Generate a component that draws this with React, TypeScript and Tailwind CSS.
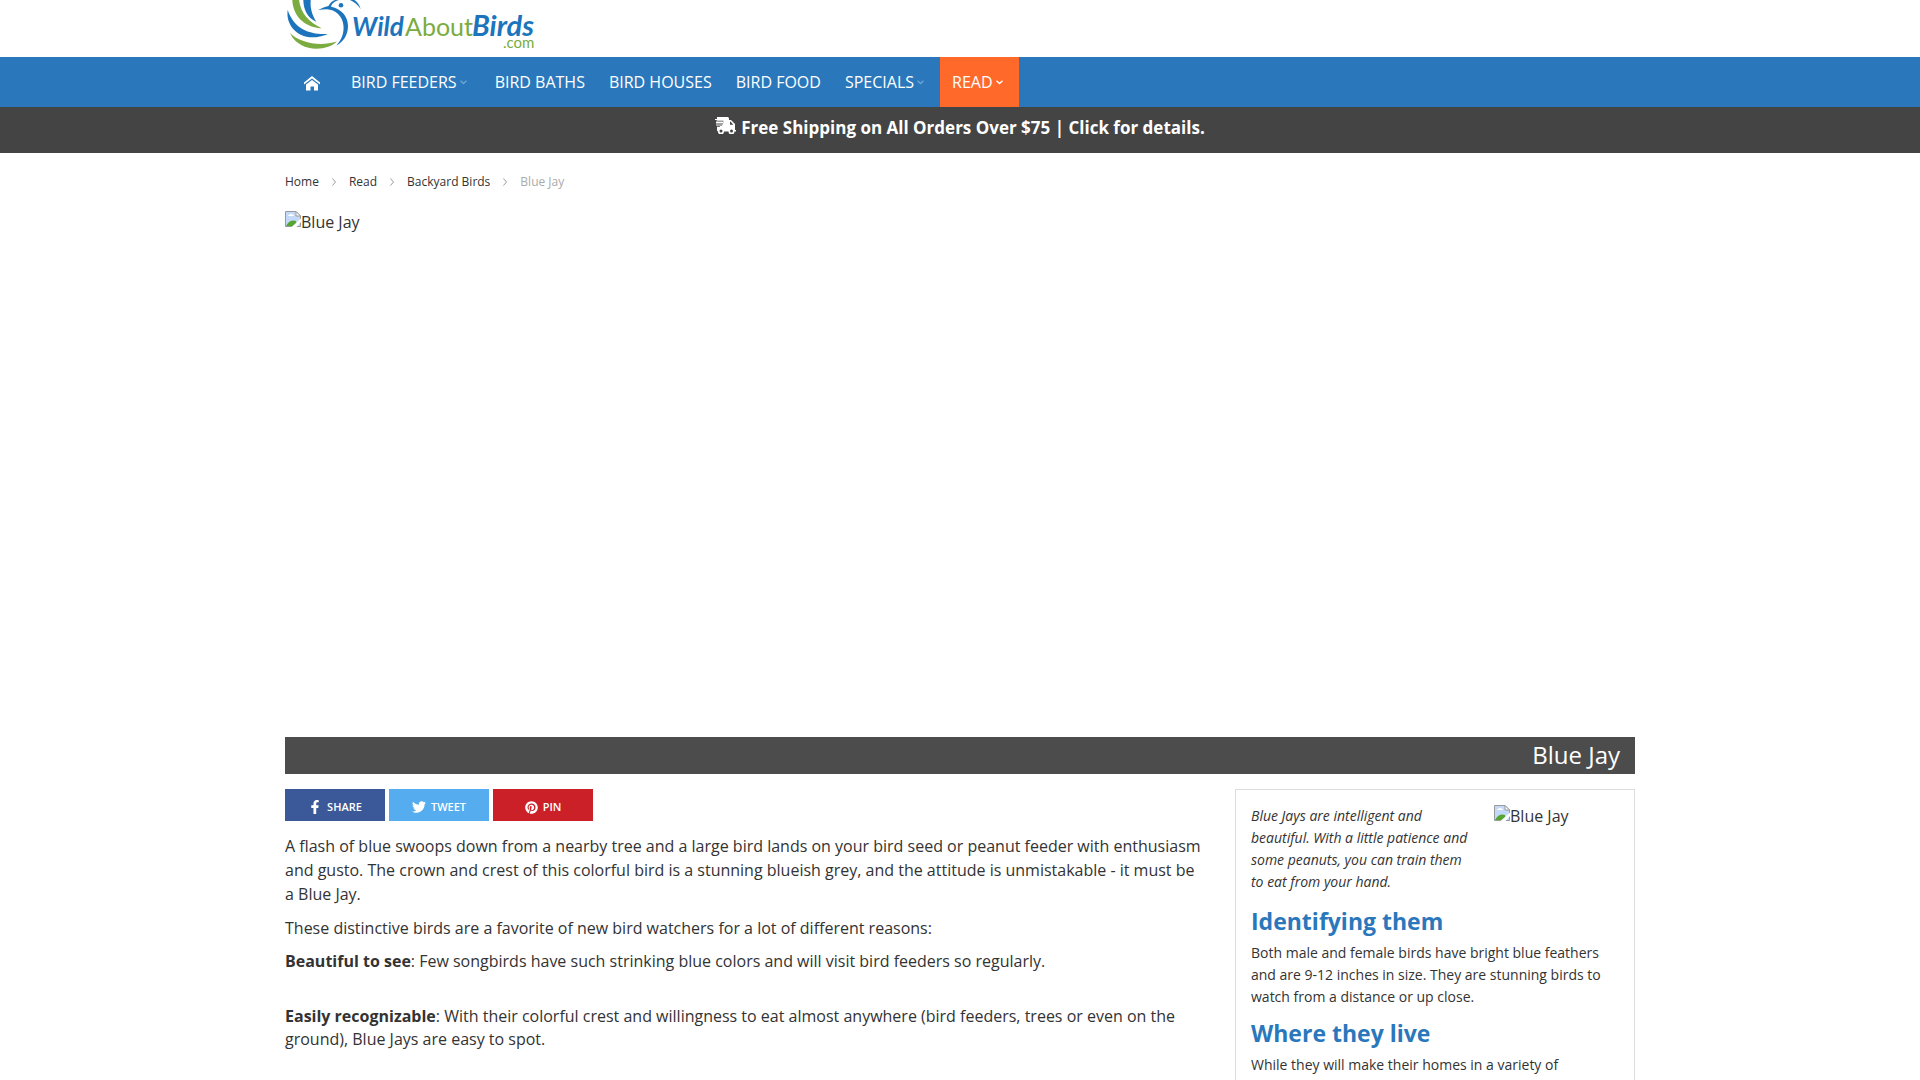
import React from "react";
import { FaFacebookF, FaTwitter, FaPinterest } from "react-icons/fa";

const NAV = [
  { label: "BIRD FEEDERS", menu: true },
  { label: "BIRD BATHS" },
  { label: "BIRD HOUSES" },
  { label: "BIRD FOOD" },
  { label: "SPECIALS", menu: true },
  { label: "READ", menu: true, active: true },
];

const CRUMBS = ["Home", "Read", "Backyard Birds"];

function Logo() {
  return (
    <svg width="260" height="57" viewBox="0 0 260 57" role="img" aria-label="WildAboutBirds.com">
      <g fill="#7aac3f">
        <path d="M7.3 0C8 14 17 27 36.7 28.3C24 22 16 14 14 0Z" />
        <path d="M5 33C15 43 35 47 52 41.5C42 51.5 14 53 5 33Z" />
      </g>
      <g fill="#1c75bc">
        <path d="M18.3 0C18.5 9 22 18 31.3 21.7C27 15 25 8 25.7 0Z" />
        <path d="M2.7 10C0 27 17 45 43 34C25 35 9 29 2.7 10Z" />
        <path d="M33 10C38 7.5 41 6.5 43.5 6C45 3 47 1 50 0H54C49 1.5 46.5 4 46 6.8C57 9 63 17 63 26C63 35 58.5 41.5 51.5 45.5C57 39 59 33 58.5 26C58 16 50 9.5 42 9.2C39 9.2 36 9.6 33 10Z" />
        <path d="M65 0H69.5C72.5 2 74.5 5 75.7 9C73 5 69.5 2 65 0Z" />
        <circle cx="56" cy="5.2" r="2.3" />
      </g>
      <text x="67" y="36" fill="#1c75bc" fontFamily="Lato, sans-serif" fontSize="26" fontWeight="700" fontStyle="italic">Wild</text>
      <text x="120" y="36" fill="#7aac3f" fontFamily="Lato, sans-serif" fontSize="25" fontWeight="400">About</text>
      <text x="187" y="36" fill="#1c75bc" fontFamily="Lato, sans-serif" fontSize="29" fontWeight="700" fontStyle="italic">Birds</text>
      <text x="218" y="48" fill="#7aac3f" fontFamily="Lato, sans-serif" fontSize="15">.com</text>
    </svg>
  );
}

function HomeIcon() {
  return (
    <svg width="16" height="15" viewBox="0 0 16 15" fill="currentColor" aria-hidden="true">
      <path d="M8 0L16 6.4V8.6L8 2.4L0 8.6V6.4Z" />
      <path d="M8 4L14 8.6V14.5H10V10.5H6.5V14.5H2V8.6Z" />
    </svg>
  );
}

function ChevronDown() {
  return (
    <svg width="7" height="5" viewBox="0 0 7 5" fill="none" stroke="currentColor" strokeWidth="1.3" aria-hidden="true">
      <path d="M0.5 0.8L3.5 3.6L6.5 0.8" />
    </svg>
  );
}

function ChevronRight() {
  return (
    <svg width="4" height="8" viewBox="0 0 4 8" fill="none" stroke="#999" aria-hidden="true">
      <path d="M0.4 0.5L3.5 4L0.4 7.5" />
    </svg>
  );
}

function TruckIcon() {
  return (
    <svg width="21" height="17" viewBox="0 0 21 17" aria-hidden="true">
      <path fill="#fff" d="M2 0H12.5Q14 0 14 1.5V3H16L20 7V13H21V14.5H19.5A3 3 0 0 1 13.5 14.5H9A3 3 0 0 1 3 14.5Q2 14 2 13Z" />
      <path fill="#444" d="M15 4.5V7.8H18.4L15.4 4.5Z" />
      <path fill="#a0a0a0" d="M1 3.5H8.5V5.5L7 9H1Z" />
      <path stroke="#fff" strokeWidth="1" d="M0 2.5H9M1 5.5H8" />
      <path stroke="#444" strokeWidth="0.7" d="M0 9.5H5" />
      <circle cx="6" cy="14" r="1.5" fill="#444" />
      <circle cx="16.5" cy="14" r="1.5" fill="#444" />
    </svg>
  );
}

function MissingPicture({ label }: { label: string }) {
  return (
    <div className="flex items-start" role="img" aria-label={label}>
      <svg width="16" height="16" viewBox="0 0 16 16" aria-hidden="true">
        <path d="M0.5 0.5H11L15.5 5V15.5H0.5Z" fill="#c3d9f7" stroke="#9a9a9a" />
        <path d="M3 5Q3 3.5 5 3.5Q6 2 7.5 3.5Q9 3.5 9 5Z" fill="#fff" />
        <path d="M1 15Q5 8 11 10L12 15Z" fill="#55a532" />
        <path d="M11 0.5V5H15.5Z" fill="#fff" stroke="#9a9a9a" />
        <path d="M6.5 16L16 7.5V11L11.5 16Z" fill="#fff" />
      </svg>
      <span className="leading-[22px]">{label}</span>
    </div>
  );
}

function ShareButton({ color, icon, label }: { color: string; icon: React.ReactNode; label: string }) {
  return (
    <button className={`flex h-8 w-[100px] items-center justify-center gap-[5px] pt-1 text-[11px] font-semibold text-white ${color}`}>
      {icon}
      {label}
    </button>
  );
}

export default function App() {
  return (
    <div className="flex h-screen flex-col overflow-hidden bg-white font-['Open_Sans',sans-serif] text-base text-[#333]">
      <header className="shrink-0">
        <div className="mx-auto h-[57px] max-w-[1350px]">
          <a href="#" className="inline-block">
            <Logo />
          </a>
        </div>
        <nav className="bg-[#2a78bb] text-white">
          <div className="mx-auto flex h-[50px] max-w-[1350px]">
            <a href="#" aria-label="Home" className="flex items-center px-[19px] pt-0.5">
              <HomeIcon />
            </a>
            {NAV.map((item) => (
              <a
                key={item.label}
                href="#"
                className={`flex items-center gap-[3px] px-3 ${item.active ? "bg-[#ff6a2b]" : ""}`}
              >
                {item.label}
                {item.menu && (
                  <span className={`mr-1 ${item.active ? "text-white" : "text-[#6fa5d4]"}`}>
                    <ChevronDown />
                  </span>
                )}
              </a>
            ))}
          </div>
        </nav>
        <div className="h-[46px] bg-[#444] text-[17px] font-bold text-white">
          <a href="#" className="flex justify-center gap-[5px] pt-2">
            <span className="pt-0.5">
              <TruckIcon />
            </span>
            <span className="leading-[26px]">Free Shipping on All Orders Over $75 | Click for details.</span>
          </a>
        </div>
      </header>

      <main className="mx-auto flex min-h-0 w-full max-w-[1350px] flex-1 flex-col">
        <nav aria-label="Breadcrumb" className="flex h-[58px] shrink-0 items-center text-xs">
          {CRUMBS.map((c) => (
            <span key={c} className="flex items-center">
              <a href="#">{c}</a>
              <span className="px-[13px]">
                <ChevronRight />
              </span>
            </span>
          ))}
          <span className="text-[#aaa]">Blue Jay</span>
        </nav>

        <div className="h-[526px] shrink-0">
          <MissingPicture label="Blue Jay" />
        </div>
        <h1 className="shrink-0 bg-[#4c4c4c] pr-[15px] pb-0.5 text-right text-2xl leading-[35px] text-white">Blue Jay</h1>

        <div className="flex min-h-0 flex-1 justify-between pt-[15px]">
          <article className="w-[920px]">
            <div className="mb-[13px] flex gap-1">
              <ShareButton color="bg-[#3b5998]" icon={<FaFacebookF size={14} />} label="SHARE" />
              <ShareButton color="bg-[#55acee]" icon={<FaTwitter size={14} />} label="TWEET" />
              <ShareButton color="bg-[#cb2027]" icon={<FaPinterest size={13} />} label="PIN" />
            </div>
            <p className="mb-[10px] leading-6">
              A flash of blue swoops down from a nearby tree and a large bird lands on your bird seed or peanut feeder
              with enthusiasm and gusto. The crown and crest of this colorful bird is a stunning blueish grey, and the
              attitude is unmistakable - it must be a Blue Jay.
            </p>
            <p className="mb-[10px] leading-6">
              These distinctive birds are a favorite of new bird watchers for a lot of different reasons:
            </p>
            <p className="mb-8 leading-[23px]">
              <strong>Beautiful to see</strong>: Few songbirds have such strinking blue colors and will visit bird
              feeders so regularly.
            </p>
            <p className="leading-[23px]">
              <strong>Easily recognizable</strong>: With their colorful crest and willingness to eat almost anywhere
              (bird feeders, trees or even on the ground), Blue Jays are easy to spot.
            </p>
          </article>

          <aside className="w-[400px] border border-b-0 border-[#ddd] px-[15px] pt-[15px] text-sm leading-[22px]">
            <div className="mb-[9px] flex justify-between">
              <em className="w-[222px]">
                Blue Jays are intelligent and beautiful. With a little patience and some peanuts, you can train them to
                eat from your hand.
              </em>
              <div className="w-[125px] text-base">
                <MissingPicture label="Blue Jay" />
              </div>
            </div>
            <h2 className="mb-0.5 text-[23px] leading-[38px] font-bold text-[#2a78bb]">Identifying them</h2>
            <p className="mb-1.5">
              Both male and female birds have bright blue feathers and are 9-12 inches in size. They are stunning birds
              to watch from a distance or up close.
            </p>
            <h2 className="mb-0.5 text-[23px] leading-[38px] font-bold text-[#2a78bb]">Where they live</h2>
            <p>While they will make their homes in a variety of</p>
          </aside>
        </div>
      </main>
    </div>
  );
}
